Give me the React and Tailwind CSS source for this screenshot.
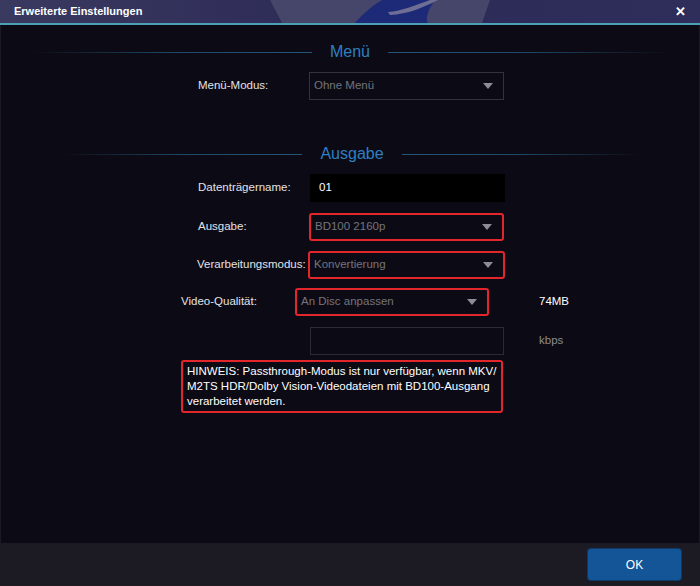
import React from "react";

const Arrow = () => (
  <svg width="10" height="6" viewBox="0 0 10 6" className="shrink-0">
    <path d="M0 0 L10 0 L5 6 Z" fill="#8d8d94" />
  </svg>
);

const Heading = ({ title, className }) => (
  <div className={`flex items-center ${className}`}>
    <div className="h-px flex-1 bg-gradient-to-r from-transparent via-[#1f4867] to-[#24557a]" />
    <span className="px-[18px] text-[16px] leading-[20px] text-[#2f7fc1]">{title}</span>
    <div className="h-px flex-1 bg-gradient-to-l from-transparent via-[#1f4867] to-[#24557a]" />
  </div>
);

const Select = ({ value, red, className = "" }) => (
  <div
    className={`flex h-[28px] items-center justify-between pl-[4px] pr-[10px] ${
      red ? "rounded-[3px] border-2 border-[#e3262b]" : "border border-[#34333d]"
    } ${className}`}
  >
    <span className="text-[#74747c]">{value}</span>
    <Arrow />
  </div>
);

export default function App() {
  return (
    <div
      className="flex h-[586px] w-[700px] flex-col bg-[#0c0b15] text-[11.5px] text-[#e2e2e6]"
      style={{ fontFamily: '"Liberation Sans", Arial, sans-serif' }}
    >
      {/* title bar */}
      <div className="relative flex h-[23px] shrink-0 items-center justify-between overflow-hidden bg-gradient-to-r from-[#3a395f] via-[#2c2a57] to-[#2f2d5a] px-[14px]">
        <svg className="absolute left-[260px] top-0" width="240" height="23" viewBox="0 0 240 23">
          <path d="M10 0 H230 L222 23 H22 Z" fill="#46456a" />
          <path d="M95 23 C105 12 112 6 122 0 H175 C168 10 165 18 168 23 Z" fill="#1d2a78" />
          <ellipse cx="135" cy="4" rx="11" ry="8" fill="#1d2a78" />
          <path d="M128 12 C142 11 156 5 170 0 L178 0 C162 8 148 14 130 15 Z" fill="#6f6f95" />
        </svg>
        <span className="relative text-[11px] font-bold text-white">Erweiterte Einstellungen</span>
        <span className="relative text-[13px] font-bold text-white">✕</span>
      </div>
      <div className="h-[2px] shrink-0 bg-[#4d9fb3]" />

      {/* body */}
      <div className="flex flex-1 flex-col border-x border-[#1a1925]">
        <Heading title="Menü" className="mx-[30px] mt-[17px]" />

        <div className="mt-[10px] flex items-center">
          <span className="ml-[197px] w-[111px]">Menü-Modus:</span>
          <Select value="Ohne Menü" className="w-[195px]" />
        </div>

        <Heading title="Ausgabe" className="ml-[62px] mr-[58px] mt-[44px]" />

        <div className="mt-[10px] flex items-center">
          <span className="ml-[197px] w-[112px]">Datenträgername:</span>
          <div className="flex h-[28px] w-[195px] items-center bg-black px-[9px] text-white">01</div>
        </div>

        <div className="mt-[11px] flex items-center">
          <span className="ml-[197px] w-[111px]">Ausgabe:</span>
          <Select value="BD100 2160p" red className="w-[195px]" />
        </div>

        <div className="mt-[10px] flex items-center">
          <span className="ml-[196px] w-[111px]">Verarbeitungsmodus:</span>
          <Select value="Konvertierung" red className="w-[197px]" />
        </div>

        <div className="mt-[9px] flex items-center">
          <span className="ml-[180px] w-[114px]">Video-Qualität:</span>
          <Select value="An Disc anpassen" red className="w-[194px]" />
          <span className="ml-[50px] text-white">74MB</span>
        </div>

        <div className="mt-[11px] flex items-center">
          <div className="ml-[309px] h-[28px] w-[194px] border border-[#2c2b35]" />
          <span className="ml-[35px] text-[#8c8c94]">kbps</span>
        </div>

        <div className="ml-[180px] mt-[5px] w-[322px] rounded-[3px] border-2 border-[#e3262b] px-[4px] py-[2px] leading-[15px] text-white">
          HINWEIS: Passthrough-Modus ist nur verfügbar, wenn MKV/ M2TS HDR/Dolby Vision-Videodateien mit BD100-Ausgang verarbeitet werden.
        </div>
      </div>

      {/* footer */}
      <div className="flex h-[43px] shrink-0 items-center justify-end bg-[#1c1b23] pr-[19px]">
        <button className="h-[31px] w-[93px] rounded-[3px] bg-[#135597] text-[12px] text-white shadow-[0_0_0_1px_#0d3a66]">
          OK
        </button>
      </div>
    </div>
  );
}
